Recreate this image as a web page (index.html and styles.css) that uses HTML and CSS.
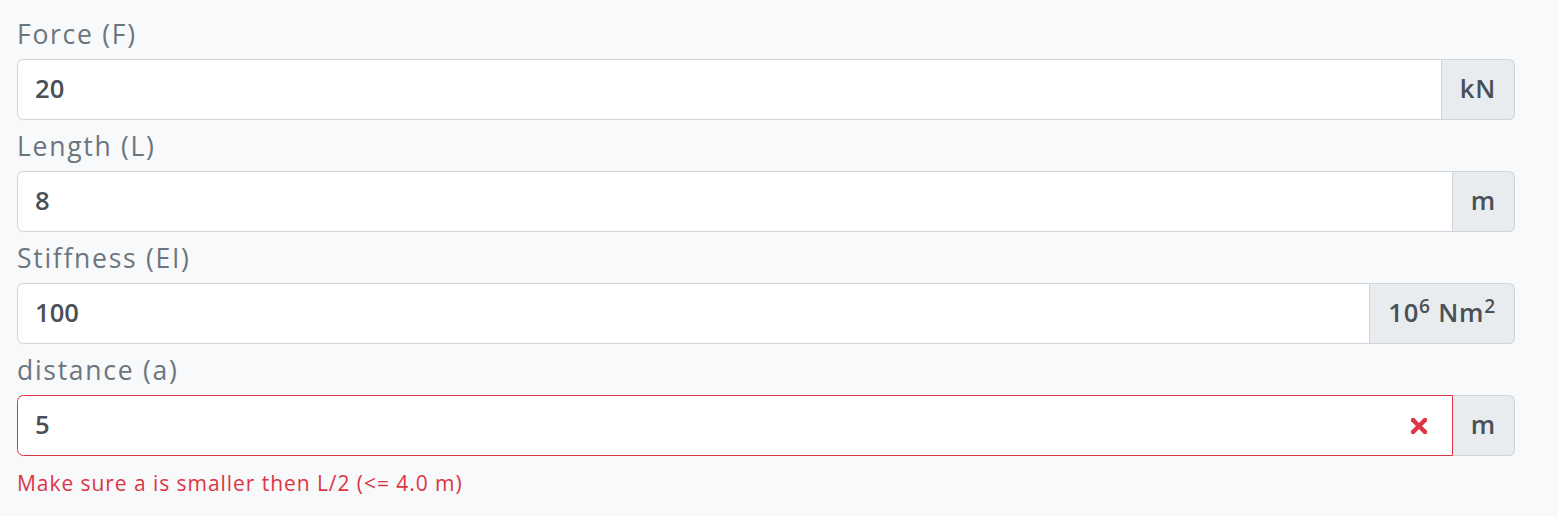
FILE: index.html
```html
<!DOCTYPE html>
<html>
<head>
<meta charset="utf-8">
<link rel="stylesheet" href="styles.css">
</head>
<body>
<div class="form">
  <div class="group">
    <label class="label">Force (F)</label>
    <div class="input-group">
      <div class="control"><span class="value">20</span></div>
      <div class="addon"><span>kN</span></div>
    </div>
  </div>
  <div class="group">
    <label class="label">Length (L)</label>
    <div class="input-group">
      <div class="control"><span class="value">8</span></div>
      <div class="addon"><span>m</span></div>
    </div>
  </div>
  <div class="group">
    <label class="label">Stiffness (EI)</label>
    <div class="input-group">
      <div class="control"><span class="value">100</span></div>
      <div class="addon"><span>10<sup>6</sup> Nm<sup>2</sup></span></div>
    </div>
  </div>
  <div class="group">
    <label class="label">distance (a)</label>
    <div class="input-group">
      <div class="control invalid">
        <span class="value">5</span>
        <svg class="x-icon" viewBox="-2 -2 7 7" width="28" height="28"><path stroke="#dc3545" stroke-width="1.1" d="M0 0l3 3m0-3L0 3"/><circle fill="#dc3545" r=".55"/><circle fill="#dc3545" cx="3" r=".55"/><circle fill="#dc3545" cy="3" r=".55"/><circle fill="#dc3545" cx="3" cy="3" r=".55"/></svg>
      </div>
      <div class="addon"><span>m</span></div>
    </div>
    <div class="feedback">Make sure a is smaller then L/2 (&lt;= 4.0 m)</div>
  </div>
</div>
</body>
</html>
```

FILE: styles.css
```css
html, body {
  margin: 0;
  padding: 0;
  background: #f8f9fa;
}
body {
  font-family: "Open Sans", "Liberation Sans", sans-serif;
  font-size: 25.6px;
  line-height: 1.5;
  color: #212529;
}
.form {
  width: 1498px;
  margin-left: 17px;
  padding-top: 8px;
}
.group {
  display: flex;
  flex-direction: column;
}
.label {
  display: block;
  color: #6c757d;
  font-size: 26.5px;
  letter-spacing: 0.065em;
  line-height: 38.4px;
  padding-top: 7px;
  margin-bottom: 5.8px;
}
.input-group {
  display: flex;
  height: 60.8px;
}
.control {
  flex: 1;
  display: flex;
  align-items: center;
  box-sizing: border-box;
  background: #fff;
  border: 1px solid #ced4da;
  border-radius: 6.4px 0 0 6.4px;
  padding: 0 18px 0 17px;
  color: #495057;
  font-weight: 600;
}
.control.invalid {
  border-color: #dc3545;
  justify-content: space-between;
  padding-right: 19px;
}
.x-icon {
  display: block;
}
.addon {
  display: flex;
  align-items: center;
  box-sizing: border-box;
  background: #e9ecef;
  border: 1px solid #ced4da;
  border-left: 0;
  border-radius: 0 6.4px 6.4px 0;
  padding: 0 18px;
  color: #495057;
  font-weight: 600;
  letter-spacing: 0.03em;
  white-space: nowrap;
}
.addon sup {
  font-size: 75%;
  line-height: 0;
  position: relative;
  vertical-align: baseline;
  top: -0.5em;
}
.feedback {
  margin-top: 12px;
  font-size: 21px;
  letter-spacing: 0.045em;
  line-height: 30.7px;
  color: #dc3545;
}
```
